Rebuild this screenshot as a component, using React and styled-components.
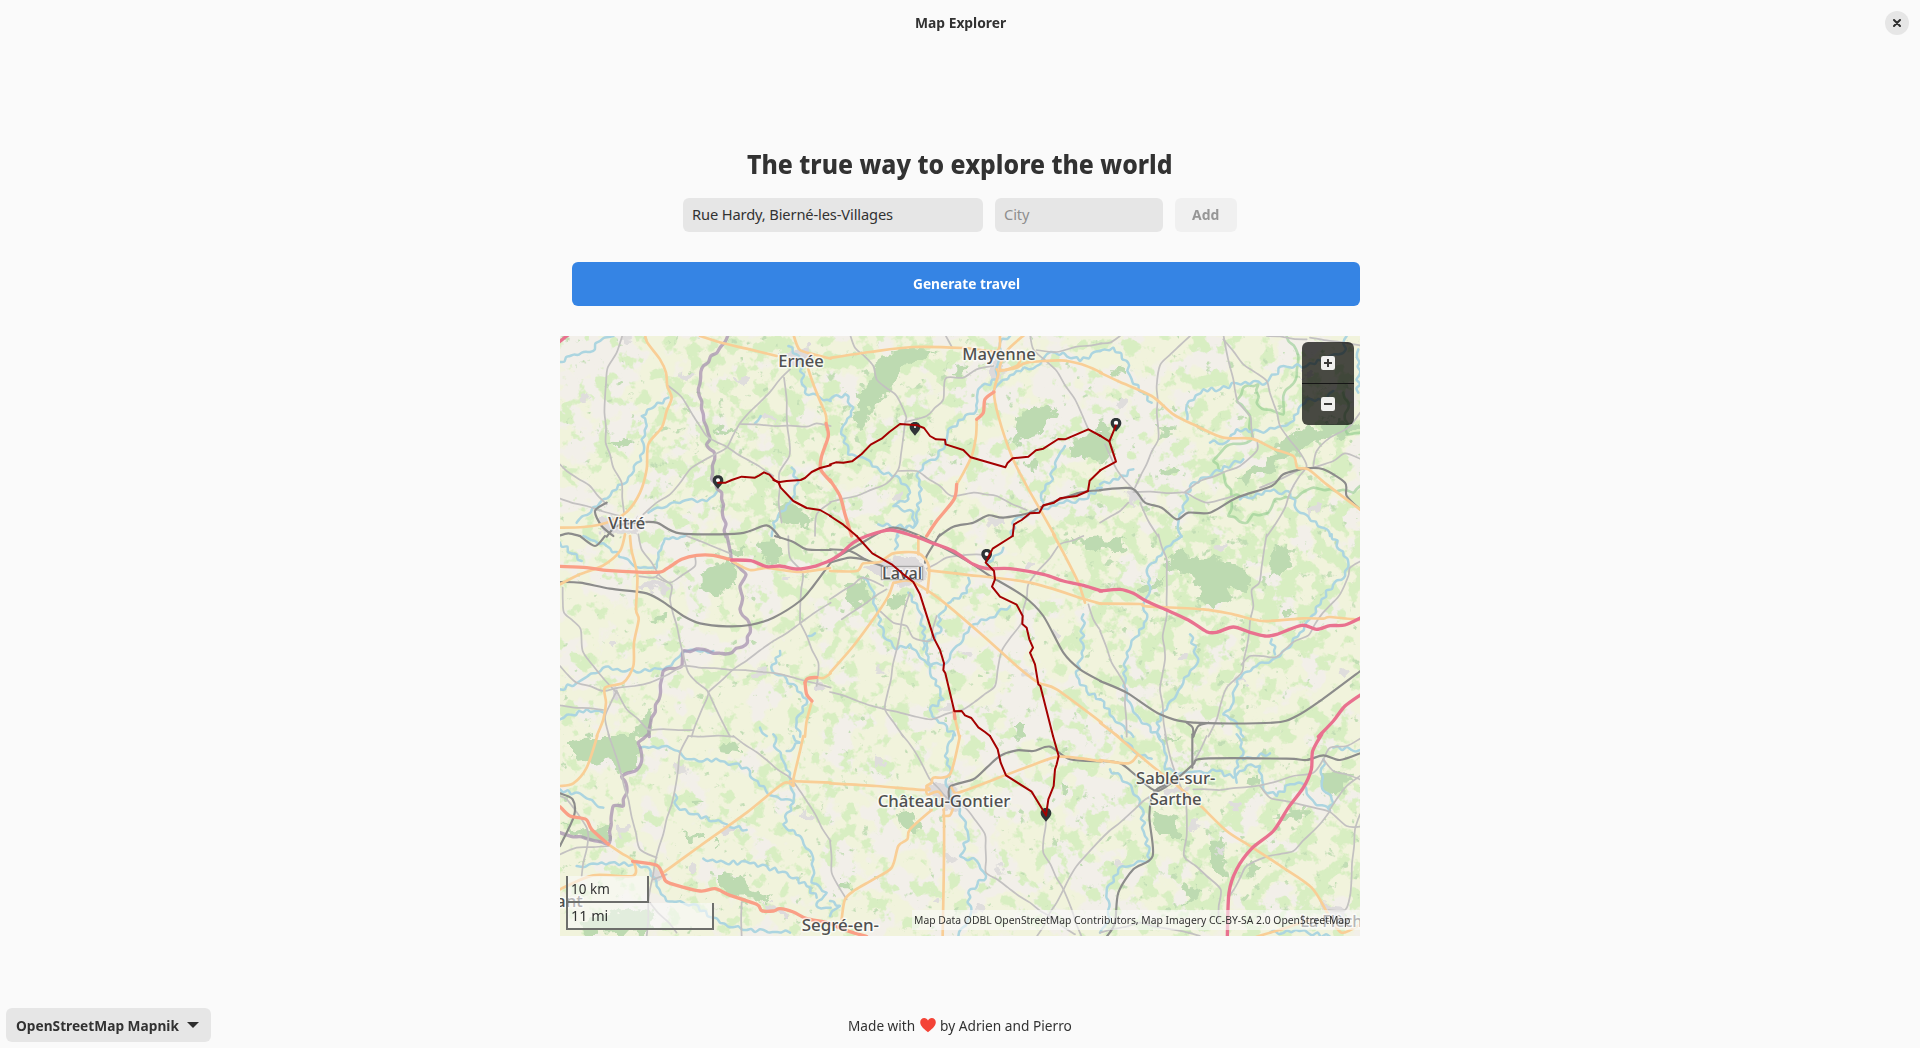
import React from "react";
import styled, { createGlobalStyle } from "styled-components";

const FONT = '"Noto Sans", "Open Sans", sans-serif';

const GlobalStyle = createGlobalStyle`
  * { box-sizing: border-box; }
  body { margin: 0; background: #fafafa; }
`;

const Window = styled.div`
  display: flex;
  flex-direction: column;
  height: 100vh;
  min-height: 1048px;
  background: #fafafa;
  color: #323232;
  font-family: ${FONT};
  font-size: 14.67px;
`;

const HeaderBar = styled.header`
  display: grid;
  grid-template-columns: 1fr auto 1fr;
  align-items: center;
  height: 46px;
  padding: 0 11px;
`;

const WindowTitle = styled.div`
  grid-column: 2;
  padding-bottom: 2px;
  font-weight: 700;
`;

const CloseButton = styled.button`
  justify-self: end;
  display: grid;
  place-items: center;
  width: 24px;
  height: 24px;
  padding: 0;
  border: 0;
  border-radius: 50%;
  background: #e6e6e6;
`;

const Content = styled.main`
  display: flex;
  flex-direction: column;
  width: 800px;
  margin: 0 auto;
  padding-top: 99px;
`;

const Heading = styled.h1`
  display: flex;
  justify-content: center;
  margin: 0;
  height: 53px;
  line-height: 38px;
  font-size: 26.6px;
  font-weight: 800;
`;

const Form = styled.div`
  display: flex;
  justify-content: center;
  gap: 12px;
`;

const Entry = styled.input`
  width: ${(p) => p.$width}px;
  height: 34px;
  padding: 0 9px 2px;
  border: 0;
  border-radius: 6px;
  background: #e6e6e6;
  color: #323232;
  font: inherit;
  letter-spacing: -0.13px;
  outline: none;
  &::placeholder { color: #8e8e8e; opacity: 1; }
`;

const Button = styled.button`
  display: flex;
  align-items: center;
  justify-content: center;
  height: ${(p) => p.$height || 34}px;
  padding: 0 17px 2px;
  border: 0;
  border-radius: 6px;
  background: ${(p) => (p.$primary ? "#3584e4" : "#f0f0f0")};
  color: ${(p) => (p.$primary ? "#fff" : "#969696")};
  font: inherit;
  font-weight: 700;
`;

const AddButton = styled(Button)`
  width: 62px;
  padding: 0 0 2px;
`;

const GenerateButton = styled(Button)`
  margin: 30px 0 30px 12px;
`;

const MapView = styled.section`
  position: relative;
  width: 800px;
  height: 600px;
  overflow: hidden;
`;

const MapCanvas = styled.svg`
  display: block;
`;

const ZoomControls = styled.div`
  position: absolute;
  top: 6px;
  right: 6px;
  width: 52px;
  height: 83px;
  display: grid;
  grid-template-rows: 41px 1px 41px;
  background: rgba(0, 0, 0, 0.7);
  border-radius: 6px;
  overflow: hidden;
`;

const ZoomButton = styled.button`
  display: grid;
  place-items: center;
  padding: 0 0 ${(p) => p.$lift || 0}px;
  border: 0;
  background: transparent;
`;

const Divider = styled.div`
  background: #151515;
`;

const ScaleBar = styled.div`
  position: absolute;
  left: 6px;
  bottom: 6px;
`;

const ScaleStep = styled.div`
  width: ${(p) => p.$width}px;
  height: 27px;
  padding-left: 3px;
  line-height: 25px;
  border: solid #6d6e6b;
  border-width: 0 2px 2px;
  background: rgba(250, 250, 250, 0.6);
`;

const License = styled.div`
  position: absolute;
  right: 0;
  bottom: 6px;
  height: 20px;
  padding: 0 9px 0 2px;
  line-height: 20px;
  background: rgba(250, 250, 250, 0.6);
  font-size: 11.4px;
`;

const Footer = styled.footer`
  display: grid;
  grid-template-columns: 1fr auto 1fr;
  align-items: center;
  margin-top: auto;
  padding: 0 6px 6px;
`;

const SourcePicker = styled.button`
  justify-self: start;
  display: flex;
  align-items: center;
  justify-content: space-between;
  width: 205px;
  height: 34px;
  padding: 0 12px 1px 10px;
  border: 0;
  border-radius: 6px;
  background: #e6e6e6;
  color: #323232;
  font: inherit;
  font-weight: 700;
`;

const Credits = styled.div`
  display: flex;
  align-items: center;
  gap: 3px;
  padding-bottom: 1px;
`;

/* Semi-condensed lettering: the glyphs are narrowed to fill the given width. */
const Fit = styled.span`
  display: block;
  flex: none;
  width: ${(p) => p.$width}px;
  white-space: nowrap;
  text-align: left;
  transform: scaleX(${(p) => p.$scale});
  transform-origin: left center;
`;

/* The map sheet is drawn on a 2400x1800 grid cut in 810x600 tiles:
   every line is [column, row, "x,y x,y ..."] in its tile's own units. */
const TILE_W = 810;
const TILE_H = 600;

const motorways = [
  [0, 0, "-5,20 20,0 35,-10"],
  [0, 1, "515,72 572,74 620,92 660,90 710,99 760,92 810,74"],
  [1, 1, "0,74 30,55 70,20 110,0 180,-18 250,0 310,22 370,45 430,85 470,98 540,98 640,115 700,135 760,148 815,165"],
  [2, 1, "0,165 60,160 100,172 140,196 200,222 265,252 320,287 350,289 400,273 450,289 495,300 530,295 605,268 650,280 690,269 735,267 785,244"],
  [2, 1, "785,474 735,510 700,555 655,602"],
  [2, 2, "665,-5 638,45 634,100 610,155 565,215 520,285 455,338 410,400 387,470 382,602"],
];

const trunks = [
  [0, 0, "798,262 805,300 785,360 782,400 812,437"],
  [1, 0, "0,432 30,480 45,535 65,600"],
  [1, 0, "492,168 465,190 460,230 440,250"],
  [1, 0, "380,445 372,490 320,555 290,600"],
  [0, 1, "0,91 80,95 150,104 290,109 320,98 365,70 410,58 460,58 515,72"],
  [0, 1, "735,440 742,428 770,424"],
  [0, 1, "735,440 740,475 756,495"],
  [1, 1, "372,525 375,548"],
  [0, 2, "0,212 30,240 78,250 95,280 145,325"],
  [0, 2, "218,376 290,388 310,420 325,440 420,465 465,458 510,478 590,505 605,524 640,525 660,518 700,528 740,548 800,560 850,580 920,602"],
];

const primaries = [
  [0, 0, "255,-5 262,20 300,70 318,110 322,150 335,185 320,225 305,275 265,325 260,400 240,470 200,528 140,560 70,573 -5,575"],
  [0, 0, "420,0 490,22 560,38 650,60"],
  [0, 0, "700,-5 718,40 760,55 812,68"],
  [0, 0, "745,100 760,145 780,195 797,235 800,262"],
  [1, 0, "0,66 120,48 250,33 400,36 500,45 510,0"],
  [1, 0, "585,-5 530,45 510,100 560,90 575,60"],
  [1, 0, "500,100 505,115 492,168 505,240 545,360 590,450 630,520 675,600"],
  [1, 0, "440,250 438,300 425,360 395,420 380,445"],
  [1, 0, "510,105 560,95 590,80 690,73 755,85 815,110"],
  [2, 0, "0,110 60,138 155,180 220,235 290,270 370,305 455,308 520,338 580,360 592,395 625,400 680,445 782,522"],
  [0, 1, "0,145 60,115 130,88 180,45 195,-5"],
  [0, 1, "210,0 215,45 232,120 228,220 236,250 222,320 220,390 190,440 135,455 138,500 130,550 110,600"],
  [0, 1, "515,75 570,102 620,96 720,108 810,96"],
  [0, 1, "770,424 790,426 812,412"],
  [0, 1, "756,495 740,555 735,602"],
  [1, 1, "0,105 80,105 100,82 150,78 190,52 260,50 290,75 298,105 292,170"],
  [1, 1, "265,0 265,55"],
  [1, 1, "190,140 175,180 140,235 70,330 0,410"],
  [1, 1, "195,140 240,135 330,190 460,300 560,390 625,440 680,460 815,560"],
  [1, 1, "295,103 400,115 600,140 765,190 815,204"],
  [1, 1, "670,-5 700,50 745,140 765,200"],
  [1, 1, "375,548 388,602"],
  [2, 1, "0,203 120,204 140,211 310,220 400,235 490,255 610,247 670,248 690,243 780,252"],
  [2, 1, "0,560 55,602"],
  [2, 2, "45,-5 150,85 230,148 300,208 380,285 450,330 545,392 635,455 685,535 725,590 785,562"],
  [2, 2, "0,72 85,82 112,58"],
  [2, 2, "470,602 560,575 610,558 640,548"],
  [0, 2, "0,150 40,142 80,95 112,0"],
  [0, 2, "145,325 185,352 220,376 219,420 100,418 0,460"],
  [0, 2, "310,410 420,330 560,230 670,142 700,150 700,130 720,45 730,0"],
  [0, 2, "690,135 812,140"],
  [1, 2, "0,142 140,150 290,162 290,150 305,140 310,125 360,115 390,0"],
  [1, 2, "290,150 292,175 340,200 338,602"],
  [1, 2, "365,155 375,170 400,165 600,90 690,62 815,76"],
  [1, 2, "305,222 240,280 232,310 205,330 185,395 130,430 75,462 45,490 35,550"],
  [1, 2, "340,240 360,238 368,220"],
];

const minors = [
  [0, 0, "188,-5 170,50 143,95 135,185 137,320 160,395 185,440 192,530"],
  [0, 0, "325,150 362,180 400,240 440,300 500,332 560,370 640,420"],
  [0, 0, "690,100 540,262 500,335 390,400 330,475 290,500 250,535"],
  [0, 0, "672,125 680,190 688,360 658,410 656,500 665,560"],
  [0, 0, "540,264 640,270 740,272 770,262 812,270"],
  [0, 0, "0,385 20,405 90,450 140,505"],
  [0, 0, "0,488 80,510 180,540"],
  [0, 0, "812,500 770,535 765,600"],
  [1, 0, "60,-5 75,35 130,90 140,130 200,180 228,240 225,260 205,400 170,442 80,480 0,498"],
  [1, 0, "228,258 290,240 340,190 347,127 400,125 440,100 490,90"],
  [1, 0, "205,405 260,405 330,450 365,480 430,470 500,480 590,522"],
  [1, 0, "345,-5 365,32"],
  [1, 0, "600,-5 610,40 680,105 735,190 775,280"],
  [1, 0, "620,42 680,48 740,32 815,22"],
  [2, 0, "0,22 30,20 60,0"],
  [2, 0, "270,0 180,88 170,150 175,310 105,455"],
  [2, 0, "370,-5 400,130 415,200 450,240 460,310"],
  [2, 0, "370,10 430,85 500,135 520,200 540,270 600,350 620,390 580,450 555,515 500,602"],
  [2, 0, "620,10 500,0"],
  [2, 0, "630,5 780,28"],
  [2, 0, "780,230 745,275 690,305 650,345 640,390"],
  [2, 0, "100,468 255,470 320,500 400,480"],
  [2, 0, "255,468 300,435 420,390 470,345 472,320"],
  [2, 0, "120,500 145,555 175,602"],
  [2, 0, "0,560 60,525 85,500"],
  [2, 0, "600,400 540,430 480,455"],
  [2, 0, "640,395 700,375 735,352 780,368"],
  [2, 0, "15,325 50,400 100,460"],
  [0, 1, "8,155 12,230 62,280 68,345 100,390 170,470"],
  [0, 1, "0,390 50,440 130,465 270,440 370,390 650,412 740,436 812,455"],
  [0, 1, "235,-5 245,40 300,120 335,150 330,190 368,350 385,410 445,470 405,570 395,602"],
  [0, 1, "290,125 330,140 405,90 405,60"],
  [0, 1, "445,468 520,400 720,262 812,200"],
  [0, 1, "445,468 510,602"],
  [0, 1, "720,262 728,110 690,65 685,0"],
  [0, 1, "720,260 775,380 770,450"],
  [0, 1, "0,508 130,522"],
  [0, 1, "170,465 200,520 265,580 400,582"],
  [0, 1, "170,465 135,545 148,602"],
  [0, 1, "380,0 510,52"],
  [0, 1, "230,120 280,125 300,110"],
  [1, 1, "0,468 165,520 305,550 400,520 495,450 515,345 575,260 595,145 690,25 760,0"],
  [1, 1, "240,170 215,255 165,520 220,602"],
  [1, 1, "150,225 190,260 230,270 250,305 300,315 320,240"],
  [1, 1, "0,190 100,125 160,150"],
  [1, 1, "290,98 350,65 440,55 470,60"],
  [1, 1, "35,250 110,200 170,160"],
  [1, 1, "775,205 790,250 812,285"],
  [2, 1, "0,285 35,380 75,450 80,602"],
  [2, 1, "175,-5 200,70 200,240 188,300 195,370 180,460 198,602"],
  [2, 1, "500,-5 478,140 455,162 460,210 425,410 380,455 350,550 325,602"],
  [2, 1, "425,385 450,360 530,362 580,318 625,298 665,235 720,175 745,120 750,95 782,75"],
  [0, 2, "145,-5 185,120 205,190 240,340 290,365"],
  [0, 2, "385,0 360,50 345,160 285,380 265,500 260,602"],
  [0, 2, "520,0 690,125 720,165 812,315"],
  [0, 2, "150,330 50,335 0,355"],
  [0, 2, "65,420 85,300 80,275 20,190 0,180"],
  [0, 2, "270,500 350,590"],
  [0, 2, "545,498 545,602"],
  [0, 2, "280,430 320,415"],
  [0, 2, "385,0 520,2"],
  [1, 2, "215,-5 260,55 300,130 350,185 405,215 465,295 468,410 600,500 735,595"],
  [1, 2, "0,315 5,410 50,490"],
  [1, 2, "648,230 640,350 700,460 725,520 755,602"],
  [1, 2, "812,310 740,390 680,500 620,602"],
  [2, 2, "0,312 60,260 130,195 190,155"],
  [2, 2, "195,-5 210,60 235,135 258,200 260,300 252,360 320,420 362,460 355,560"],
  [2, 2, "280,160 360,162 480,148 580,120 640,110 670,70 690,35 740,30 780,8"],
  [2, 2, "480,150 510,185 600,205 690,228 740,270 780,272"],
  [2, 2, "690,225 640,285 580,345 500,362 440,390 405,455 385,485"],
  [2, 2, "690,220 740,150 780,120"],
  [2, 2, "670,70 700,105 780,130"],
  [2, 2, "780,235 765,280 750,480 735,522 685,522"],
  [2, 2, "0,590 120,560 300,600"],
  [2, 2, "320,0 280,80"],
];

const rivers = [
  [0, 0, "0,78 30,60 90,48 120,15 160,0"],
  [0, 0, "325,185 285,210 245,240 260,270 245,310 250,350 215,415 170,460 120,500 50,560"],
  [0, 0, "685,30 720,65 735,170 780,185 812,195"],
  [0, 0, "470,468 440,495 370,495 280,520 265,530"],
  [0, 0, "585,262 602,240"],
  [0, 0, "695,395 715,440 690,500 640,560 635,600"],
  [1, 0, "0,190 45,175 70,215 35,280 55,355 110,370 150,405 200,420 240,470 235,490 190,510 250,530 250,575 145,565"],
  [1, 0, "540,0 510,20 500,130 445,160 440,220 400,250 355,280 350,310 325,360 280,385 260,420 275,460 260,530 255,570"],
  [1, 0, "812,45 750,75 700,50 650,55 620,90 560,105 510,140 490,165"],
  [1, 0, "705,330 680,370 660,440 635,470 640,500"],
  [1, 0, "815,455 760,490 700,500 630,520 555,550 545,600"],
  [1, 0, "200,600 230,572"],
  [2, 0, "0,45 40,35 80,75 95,130 155,200"],
  [2, 0, "262,250 260,210 310,160 360,160 410,142 500,140 550,90 620,90 690,60 730,50 740,0"],
  [2, 0, "330,320 380,318 410,280 490,290 570,260 620,190 680,190 700,165"],
  [2, 0, "775,40 775,170"],
  [2, 0, "0,445 55,430 100,400"],
  [2, 0, "430,370 340,410 270,450 255,500 235,560 245,602"],
  [2, 0, "420,490 510,465 570,470 600,530 680,580 690,600"],
  [0, 1, "0,20 65,75"],
  [0, 1, "70,0 140,30 190,65 240,95 290,95 295,50 315,8 375,0"],
  [0, 1, "0,460 60,435 130,395 200,405 310,400 380,345 460,345"],
  [0, 1, "0,550 80,520 130,530"],
  [0, 1, "660,345 635,400 680,430 740,490 710,560 720,602"],
  [0, 1, "745,300 765,292"],
  [0, 1, "600,575 620,600"],
  [1, 1, "415,125 410,170 350,205 325,240 330,290 290,325 300,400 340,490 300,520 320,550 375,598"],
  [1, 1, "540,210 480,245 430,265 380,330 350,380 305,385"],
  [1, 1, "100,125 125,160 145,240 160,300 200,340 240,325 270,365 305,390"],
  [1, 1, "235,170 270,230 285,300 280,340"],
  [1, 1, "205,0 195,40"],
  [1, 1, "520,35 470,90"],
  [1, 1, "760,235 755,350 740,420 770,465 812,490"],
  [2, 1, "245,0 190,45 140,105 150,165 130,210 140,250 80,350 70,450 90,500 120,550 175,602"],
  [2, 1, "270,295 295,370 250,440 200,520 170,560 180,602"],
  [2, 1, "695,-5 745,80 735,120 700,145 665,190 635,240 600,290 540,360 470,390 410,430 400,500 370,535 410,560 430,602"],
  [2, 1, "515,310 525,355"],
  [2, 1, "0,490 40,545 100,602"],
  [0, 2, "240,35 320,30 390,70 480,75 560,95 580,130 640,180 700,200 670,265 720,300 760,370 755,440 800,470 770,510 812,515"],
  [0, 2, "640,-5 650,40 690,110 700,200"],
  [0, 2, "680,45 720,20 700,0"],
  [0, 2, "0,160 70,180 130,215"],
  [0, 2, "345,175 350,210 400,235 500,265 560,282"],
  [0, 2, "430,368 470,378 570,382 680,410 740,450 770,485"],
  [0, 2, "50,390 150,380 220,385 265,395 290,450 320,495 400,505 480,560 560,582 690,590"],
  [1, 2, "370,-5 345,60 360,95 350,150 390,220 415,300 390,360 440,375 468,420 415,470 420,540 385,602"],
  [1, 2, "0,495 30,510 0,540"],
  [2, 2, "30,100 80,140 120,195 135,300 150,370 90,390 55,400 20,470 30,550 0,590"],
  [2, 2, "65,0 100,45 155,68"],
  [2, 2, "175,-5 200,60 195,100 250,110 350,105 400,125 440,90 480,90 490,160 530,180 570,145 610,145 640,195 690,225 695,190 665,150 670,70"],
  [2, 2, "410,-5 430,45 405,100 410,140"],
  [2, 2, "430,70 510,52"],
  [2, 2, "700,35 780,42"],
  [2, 2, "510,590 600,585 690,602"],
];

const railways = [
  [0, 0, "140,500 105,525 125,570 160,600"],
  [0, 0, "140,602 170,570 230,560 290,560 360,592 540,592 620,568 660,605"],
  [0, 0, "-5,600 25,592 60,600"],
  [1, 0, "325,602 370,572 430,560 475,538 520,545 600,530 640,510 750,470 812,463"],
  [2, 0, "0,462 95,457 135,500 185,515 230,550 265,530 330,530 410,485 515,450 550,415 620,397 670,400 735,440 740,480 782,522"],
  [0, 1, "0,138 60,140 150,158 260,172 320,205 370,240 420,262 500,271 570,267 640,245 720,195 760,150 812,80"],
  [0, 1, "60,0 105,30 135,0"],
  [0, 1, "645,0 700,18 740,40 812,42"],
  [1, 1, "0,40 60,45 110,72 170,95"],
  [1, 1, "0,80 60,65 110,72"],
  [1, 1, "330,-5 290,60 285,80"],
  [1, 1, "0,75 80,30 180,-24 250,-8 330,30 420,80 480,120 580,180 640,240 700,350 750,400 812,435"],
  [2, 1, "0,435 80,470 180,535 280,560 520,560 590,540 660,495 785,402"],
  [2, 1, "260,560 278,575 280,602"],
  [2, 1, "325,560 295,570 280,602"],
  [1, 2, "360,200 360,152 430,130 470,95 510,60 560,43 610,45 660,32 720,70 812,76"],
  [2, 2, "0,75 60,82 110,120 170,165 240,120 280,85 312,68 560,68 620,72 670,58 720,72 785,50"],
  [2, 2, "277,-5 277,95"],
  [2, 2, "240,130 165,165 148,240 158,360 100,400 55,470 45,560 20,602"],
  [0, 2, "0,172 38,190 42,240 0,330"],
];

const borders = [
  [0, 0, "505,-5 480,35 430,90 415,160 430,235 450,310 440,325 462,348 455,430 485,470 498,602"],
  [0, 1, "500,-5 515,75 558,115 540,150 548,185 540,220 570,270 562,320 515,350 460,352 430,340 370,345 365,390 310,405 297,490 275,545 268,602"],
  [0, 2, "265,-5 235,20 245,75 225,105 185,122 200,150 190,210 160,210 145,325 80,308 0,290"],
];

const parkEdges = [
  [2, 0, "560,0 595,60 590,120 550,180 550,235 490,220 470,200 475,145 430,155 410,195 450,240 455,310 440,320 380,330 340,375 370,410 395,480 440,480"],
  [2, 0, "395,500 385,540 440,560 460,535 505,530 525,490 590,485 640,455 760,470 780,450"],
  [2, 0, "730,170 745,200 735,250 745,295 780,290"],
];

const forests = [
  [0, 0, "660,510 700,505 748,545 745,570 700,562 665,552"],
  [0, 0, "135,315 170,318 210,308 215,322 185,332"],
  [0, 0, "450,268 500,280 545,300 470,292"],
  [1, 0, "150,60 240,35 320,45 270,80 210,90 205,140 160,180 120,240 90,290 65,260 95,170 130,120"],
  [1, 0, "580,210 650,220 685,235 650,255 640,290 580,310 545,335 560,270"],
  [1, 0, "370,90 410,85 405,120 370,110"],
  [1, 0, "590,380 620,370 615,415 590,395"],
  [1, 0, "812,285 760,310 715,335 720,360 812,375"],
  [2, 0, "0,255 30,265 35,370 0,385"],
  [2, 0, "170,270 225,275 190,320"],
  [2, 0, "410,420 500,375 520,340 600,280 720,255 785,270 785,285 640,320 560,360 520,410 440,440"],
  [2, 0, "180,400 235,395 230,420 195,425"],
  [2, 0, "45,100 75,95 75,120 50,122"],
  [0, 1, "420,110 500,68 530,105 525,145 480,165 465,190 435,170"],
  [0, 1, "585,15 650,8 665,50 640,80 605,65"],
  [0, 1, "520,40 560,30 545,55 520,60"],
  [0, 1, "255,245 310,235 308,252 280,258"],
  [0, 1, "270,510 285,560 265,602 210,602 250,550"],
  [1, 1, "40,145 110,130 115,190 60,210"],
  [1, 1, "180,180 230,178 225,215 180,218"],
  [1, 1, "730,10 812,0 812,50 760,30"],
  [1, 1, "550,570 590,570 585,602 555,602"],
  [2, 1, "200,75 250,35 300,85 340,62 420,80 465,130 440,160 380,155 390,190 340,220 290,190 310,150 250,110 200,115"],
  [2, 1, "515,35 560,30 565,100 510,130"],
  [2, 1, "0,10 90,15 60,40 0,35"],
  [2, 1, "100,150 200,130 130,175"],
  [2, 1, "540,210 590,230 545,235"],
  [0, 2, "30,15 95,0 235,0 230,100 180,115 140,70 60,85 30,50"],
  [0, 2, "480,415 540,420 570,460 630,480 600,500 550,490 480,460"],
  [0, 2, "0,265 100,290 150,265 145,325 60,300"],
  [0, 2, "380,300 420,290 440,305 390,315"],
  [0, 2, "460,300 475,335 450,325"],
  [0, 2, "480,20 540,30 540,50 485,42"],
  [0, 2, "60,560 210,515 280,530 270,590 80,598"],
  [0, 2, "390,195 430,190 410,215"],
  [1, 2, "195,235 240,225 270,275 250,290 200,260"],
  [1, 2, "20,440 70,445 60,460 25,460"],
  [1, 2, "700,145 720,155 705,175"],
  [2, 2, "165,230 230,250 250,300 180,300 160,260"],
  [2, 2, "330,325 380,315 370,370 385,430 330,410"],
  [2, 2, "570,220 630,215 600,250 530,255"],
  [2, 2, "660,120 750,110 740,180 670,165"],
  [2, 2, "450,370 490,390 440,430"],
  [2, 2, "440,120 485,120 480,150 430,155"],
  [2, 2, "190,0 250,5 200,25"],
  [2, 2, "260,440 300,470 250,510"],
];

const towns = [
  [0, 0, "660,45 760,35 745,90 690,80"],
  [0, 0, "110,540 240,545 230,590 130,590"],
  [1, 0, "480,80 525,60 515,115 485,140"],
  [1, 1, "90,95 180,65 280,60 285,140 240,150 150,125"],
  [2, 0, "80,465 135,470 130,498 80,490"],
  [1, 2, "300,150 370,148 395,200 380,230 320,200"],
  [2, 2, "190,145 275,150 265,175 195,172"],
  [0, 1, "235,138 330,140 320,165 245,158"],
  [0, 1, "155,455 185,468 170,495 145,485"],
  [0, 2, "485,275 525,290 510,305 488,290"],
  [0, 2, "610,492 700,528 675,540 615,515"],
  [2, 2, "660,500 730,510 740,560 690,535"],
  [0, 2, "275,405 315,412 300,435 278,428"],
  [0, 1, "765,435 785,450 770,470"],
];

const route = [
  [0, 0, "474,440 497,440 515,432 545,422 585,425 598,418 612,409 628,416 643,432 655,439 680,435 722,432 735,426 755,408 780,396 812,388"],
  [0, 0, "640,432 655,438 662,455 700,495 740,516 780,522 812,540"],
  [1, 0, "0,385 18,379 40,380 66,376 95,354 122,326 155,308 178,288 210,264 262,268 282,276 300,300 318,310 345,311 347,325 400,342 422,364 526,394 532,382 548,367 595,362 618,343 640,338 685,309 705,310 775,280 812,300"],
  [1, 0, "812,402 779,434 774,465 740,480 690,487 672,500 640,508 628,530 600,532 575,552 552,565 548,600"],
  [1, 0, "0,540 40,566 80,600"],
  [2, 0, "48,268 28,316 48,377 0,403"],
  [2, 0, "0,299 28,316"],
  [1, 1, "80,0 127,52 185,85 220,115 250,138 270,175 312,307 330,342 342,382 340,402 346,412 373,526 395,525 405,538 424,546 445,574 465,588 480,600"],
  [1, 1, "548,0 488,38 467,80 492,105 495,130 486,152 510,182 560,206 578,240 577,264 590,275 598,310 609,335 600,350 615,385 625,445 631,450 669,600"],
  [1, 2, "480,0 503,40 512,80 528,118 605,167 648,238"],
  [1, 2, "669,0 686,60 680,85 675,100 671,150 655,190 648,238"],
];

/* x, tip-side top and the radius of the white eye. */
const pins = [
  [474, 418, 6],
  [1065, 258, 3],
  [1668, 246, 6.5],
  [1280, 639, 6],
  [1458, 1416, 0],
];

const labels = [
  ["Ernée", 723, 93, 137],
  ["Mayenne", 1317, 72, 220],
  ["Vitré", 200, 578, 111],
  ["Laval", 1026, 728, 120],
  ["Château-Gontier", 1152, 1413, 398],
  ["Sablé-sur-", 1847, 1344, 238],
  ["Sarthe", 1847, 1408, 156],
  ["Segré-en-", 841, 1784, 232],
  ["ant", 28, 1712, 80],
  ["La Flèche", 2328, 1774, 214],
];

const hamlets = [
  [200, 10], [380, 115], [620, 250], [70, 190], [550, 135], [1690, 195], [1400, 690], [600, 1010],
  [155, 915], [680, 725], [960, 1010], [1230, 950], [955, 1275], [1165, 1560], [1400, 1010],
  [1130, 1690], [1670, 1580], [1980, 630], [2240, 120], [1870, 960], [2040, 1030], [2350, 1010],
  [2025, 1410], [1250, 1720], [1320, 1600], [1010, 480], [1160, 1110], [360, 1300], [740, 1440],
  [1900, 1470], [1980, 1540], [2260, 515], [1310, 560], [1490, 900], [400, 1600], [190, 1480],
];

/* Relative ground cover: where meadows get denser, and where bare ground shows. */
const meadowZones = [
  [620, 300, 330, 380, 0.8], [1030, 170, 260, 260, 0.9], [420, 330, 180, 150, 0.6],
  [2150, 420, 380, 300, 0.75], [1980, 740, 420, 250, 1], [2150, 1450, 330, 380, 0.9],
  [1580, 660, 200, 180, 0.7], [1480, 1400, 170, 260, 0.6], [740, 600, 160, 220, 0.7],
  [1420, 440, 180, 120, 0.4], [1840, 1150, 300, 220, 0.55], [1000, 1000, 260, 240, 0.5],
  [1680, 1070, 200, 140, 0.5], [760, 1350, 200, 180, 0.5], [140, 300, 180, 160, 0.3],
  [1850, 1650, 240, 150, 0.8], [1550, 330, 100, 130, 0.7],
];
const bareZones = [
  [110, 130, 180, 230, 0.9], [1400, 230, 280, 280, 1], [1780, 300, 170, 260, 1], [320, 500, 180, 170, 0.7],
  [1230, 1040, 190, 170, 0.9], [1420, 1200, 250, 190, 1], [1150, 1580, 260, 230, 0.9],
  [340, 800, 220, 160, 0.7], [1600, 1500, 120, 280, 0.9], [1200, 850, 140, 120, 0.6], [50, 1080, 140, 120, 0.5],
];

const parse = ([col, row, text]) =>
  text.split(" ").map((pair) => {
    const [x, y] = pair.split(",").map(Number);
    return [x + col * TILE_W, y + row * TILE_H];
  });

const straight = (points) => "M" + points.map((p) => p.join(" ")).join("L");

function smooth(points) {
  let d = `M${points[0].join(" ")}`;
  for (let i = 0; i < points.length - 1; i += 1) {
    const a = points[i - 1] || points[i];
    const b = points[i];
    const c = points[i + 1];
    const e = points[i + 2] || c;
    const c1 = [b[0] + (c[0] - a[0]) / 7, b[1] + (c[1] - a[1]) / 7];
    const c2 = [c[0] - (e[0] - b[0]) / 7, c[1] - (e[1] - b[1]) / 7];
    d += `C${[...c1, ...c2, ...c].map((n) => n.toFixed(1)).join(" ")}`;
  }
  return d;
}

/* Splits each leg in short steps pushed left and right of it. */
function meander(points, step, swing) {
  const out = [points[0]];
  for (let i = 0; i < points.length - 1; i += 1) {
    const [x0, y0] = points[i];
    const [x1, y1] = points[i + 1];
    const len = Math.hypot(x1 - x0, y1 - y0);
    const n = Math.max(1, Math.round(len / step));
    for (let k = 1; k < n; k += 1) {
      const side = swing * 1.5 * Math.sin(k * 2.3 + x0 * 0.7 + Math.sin(k * 1.3 + y0));
      const t = k / n;
      out.push([
        x0 + (x1 - x0) * t - ((y1 - y0) / len) * side,
        y0 + (y1 - y0) * t + ((x1 - x0) / len) * side,
      ]);
    }
    out.push([x1, y1]);
  }
  return out;
}

function Lines({ data, color, width, opacity, shape = (p) => smooth(p) }) {
  return (
    <g fill="none" stroke={color} strokeWidth={width} opacity={opacity} strokeLinejoin="round" strokeLinecap="round">
      {data.map((line, i) => (
        <path key={i} d={shape(parse(line))} />
      ))}
    </g>
  );
}

function Areas({ data, color, filter }) {
  return (
    <g fill={color} filter={filter}>
      {data.map((area, i) => (
        <path key={i} d={`${straight(parse(area))}Z`} />
      ))}
    </g>
  );
}

function CoverFilter({ id, color, frequency, seed, threshold, gain, slope }) {
  return (
    <filter id={id} filterUnits="userSpaceOnUse" x="0" y="0" width="2400" height="1800" colorInterpolationFilters="sRGB">
      <feGaussianBlur in="SourceGraphic" stdDeviation="60" result="zones" />
      <feTurbulence type="fractalNoise" baseFrequency={frequency} numOctaves="4" seed={seed} />
      <feColorMatrix values="0 0 0 0 0  0 0 0 0 0  0 0 0 0 0  1 0 0 0 0" result="noise" />
      <feComposite in="noise" in2="zones" operator="arithmetic" k1="0" k2="1" k3={gain} k4="0" />
      <feComponentTransfer result="cover">
        <feFuncA type="linear" slope={slope} intercept={-slope * threshold} />
      </feComponentTransfer>
      <feFlood floodColor={color} />
      <feComposite in2="cover" operator="in" />
    </filter>
  );
}

function Zones({ data, filter }) {
  return (
    <g filter={`url(#${filter})`}>
      <rect width="2400" height="1800" fill="#000" opacity="0.01" />
      {data.map(([cx, cy, rx, ry, o], i) => (
        <ellipse key={i} cx={cx} cy={cy} rx={rx} ry={ry} fillOpacity={o * 0.8} />
      ))}
    </g>
  );
}

function MapSheet() {
  return (
    <MapCanvas width="800" height="600" viewBox="0 0 2400 1800">
      <defs>
        <CoverFilter id="bare" color="#f2efe9" frequency="0.009" seed="8" threshold={0.57} gain={0.24} slope={14} />
        <CoverFilter id="meadow" color="#d8eec2" frequency="0.019" seed="21" threshold={0.585} gain={0.13} slope={13} />
        <CoverFilter id="copse" color="#c2ddb5" frequency="0.03" seed="5" threshold={0.74} gain={0.05} slope={12} />
        <filter id="rough" x="-5%" y="-5%" width="110%" height="110%">
          <feTurbulence type="fractalNoise" baseFrequency="0.03" numOctaves="3" seed="3" />
          <feDisplacementMap in="SourceGraphic" scale="52" xChannelSelector="R" yChannelSelector="G" />
        </filter>
      </defs>
      <rect width="2400" height="1800" fill="#f1f3dc" />
      <Zones data={bareZones} filter="bare" />
      <Zones data={meadowZones} filter="meadow" />
      <Zones data={meadowZones} filter="copse" />
      <Areas data={forests} color="#bddab1" filter="url(#rough)" />
      <Areas data={towns} color="#dddadb" filter="url(#rough)" />
      <g fill="#dfdddc" filter="url(#rough)">
        {hamlets.map(([x, y], i) => (
          <ellipse key={i} cx={x} cy={y} rx={14 + (i % 3) * 3} ry={10 + (i % 2) * 3} />
        ))}
      </g>
      <Lines data={parkEdges} color="#8cc98b" width="8" opacity="0.55" shape={(p) => smooth(meander(p, 18, 3))} />
      <Lines data={rivers} color="#acd5e0" width="7.5" shape={(p) => smooth(meander(p, 13, 3.8))} />
      <Lines data={borders} color="#a893b2" width="10" opacity="0.75" shape={(p) => smooth(meander(p, 20, 2.5))} />
      <Lines data={minors} color="#c3c1c1" width="5.2" shape={(p) => smooth(meander(p, 45, 1.5))} />
      <Lines data={railways} color="#8c8c8b" width="6.5" />
      <Lines data={primaries} color="#f9ce96" width="8" />
      <Lines data={trunks} color="#fa9f86" width="10" />
      <Lines data={motorways} color="#e9718f" width="10" />
      <g
        fontFamily='"Noto Sans", sans-serif'
        fontSize="49"
        fontWeight="500"
        fill="#505050"
        stroke="#fff"
        strokeOpacity="0.7"
        strokeWidth="9"
        strokeLinejoin="round"
        paintOrder="stroke"
        textAnchor="middle"
      >
        {labels.map(([name, x, y, width]) => (
          <text key={name} x={x} y={y} textLength={width} lengthAdjust="spacingAndGlyphs">
            {name}
          </text>
        ))}
      </g>
      <rect x="964" y="691" width="124" height="40" fill="none" stroke="#777" strokeWidth="3" opacity="0.65" />
      <g fill="#2e3436">
        {pins.map(([x, y]) => (
          <path
            key={x}
            transform={`translate(${x} ${y})`}
            d="M0 0C-9-1-16 6-16 15C-16 25-8 30 0 41C8 30 16 25 16 15C16 6 9-1 0 0Z"
          />
        ))}
        {pins.map(([x, y, eye]) => (
          <circle key={x} cx={x} cy={y + 15} r={eye} fill="#fff" />
        ))}
      </g>
      <Lines data={route} color="#a40000" width="6" shape={straight} />
    </MapCanvas>
  );
}

function ZoomGlyph({ plus }) {
  return (
    <svg width="14" height="14" viewBox="0 0 14 14">
      <rect width="14" height="14" rx="2.2" fill="#f0f0ee" />
      <path d={plus ? "M3 7H11M7 3V11" : "M3 7H11"} stroke="#3a3a38" strokeWidth="2" />
    </svg>
  );
}

export default function App() {
  return (
    <Window>
      <GlobalStyle />
      <HeaderBar>
        <WindowTitle>
          <Fit $width={91} $scale={0.943}>Map Explorer</Fit>
        </WindowTitle>
        <CloseButton aria-label="Close">
          <svg width="8" height="8" viewBox="0 0 8 8">
            <path d="M1 1L7 7M7 1L1 7" stroke="#2e2e2e" strokeWidth="2" strokeLinecap="round" />
          </svg>
        </CloseButton>
      </HeaderBar>
      <Content>
        <Heading>
          <Fit $width={426} $scale={0.932}>The true way to explore the world</Fit>
        </Heading>
        <Form>
          <Entry $width={300} defaultValue="Rue Hardy, Bierné-les-Villages" />
          <Entry $width={168} placeholder="City" />
          <AddButton disabled>
            <Fit $width={28} $scale={0.95}>Add</Fit>
          </AddButton>
        </Form>
        <GenerateButton $primary $height={44}>
          <Fit $width={107} $scale={0.935}>Generate travel</Fit>
        </GenerateButton>
        <MapView>
          <MapSheet />
          <ZoomControls>
            <ZoomButton aria-label="Zoom in">
              <ZoomGlyph plus />
            </ZoomButton>
            <Divider />
            <ZoomButton aria-label="Zoom out" $lift={2}>
              <ZoomGlyph />
            </ZoomButton>
          </ZoomControls>
          <ScaleBar>
            <ScaleStep $width={83}>
              <Fit $width={38} $scale={0.92}>10 km</Fit>
            </ScaleStep>
            <ScaleStep $width={148}>
              <Fit $width={32} $scale={0.98}>11 mi</Fit>
            </ScaleStep>
          </ScaleBar>
          <License>
            <Fit $width={437} $scale={0.908}>
              Map Data ODBL OpenStreetMap Contributors, Map Imagery CC-BY-SA 2.0 OpenStreetMap
            </Fit>
          </License>
        </MapView>
      </Content>
      <Footer>
        <SourcePicker>
          <Fit $width={163} $scale={0.935}>OpenStreetMap Mapnik</Fit>
          <svg width="12" height="6" viewBox="0 0 12 6">
            <path d="M0 0H12L6 6Z" fill="#2e2e2e" />
          </svg>
        </SourcePicker>
        <Credits>
          <Fit $width={68} $scale={0.93}>Made with</Fit>
          <svg width="18" height="16" viewBox="0 0 17 16">
            <path
              d="M8.5 15.2C5.500 12.800.7 9.300.7 5.200C.7 2.600 2.500.9 4.700.9C6.400.9 7.800 1.900 8.500 3.400C9.200 1.900 10.600.9 12.300.9C14.500.9 16.300 2.600 16.300 5.200C16.300 9.300 11.500 12.800 8.500 15.200Z"
              fill="#f44336"
            />
          </svg>
          <Fit $width={132} $scale={0.935}>by Adrien and Pierro</Fit>
        </Credits>
      </Footer>
    </Window>
  );
}
